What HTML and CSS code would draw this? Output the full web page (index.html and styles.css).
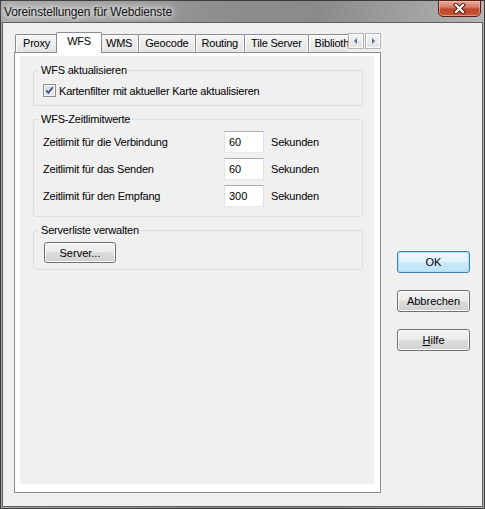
FILE: index.html
```html
<!DOCTYPE html>
<html>
<head>
  <title>Voreinstellungen für Webdienste</title>
  <meta charset="utf-8">
  <link rel="stylesheet" href="styles.css">
</head>
<body>
  <div class="window">
    <!-- Title bar -->
    <div class="titlebar">
      <span class="title">Voreinstellungen für Webdienste</span>
      <button class="close" aria-label="Schließen">
        <svg width="13" height="11" viewBox="0 0 13 11">
          <path d="M3 2 L10 9 M10 2 L3 9" stroke="#4a1d14" stroke-width="4.2" stroke-linecap="square"/>
          <path d="M3 2 L10 9 M10 2 L3 9" stroke="#fff" stroke-width="2.2" stroke-linecap="square"/>
        </svg>
      </button>
    </div>

    <div class="client">
      <!-- Tab control -->
      <div class="tabctl">
        <div class="tabstrip">
          <div class="tabs">
            <div class="tab">Proxy</div>
            <div class="tab active">WFS</div>
            <div class="tab">WMS</div>
            <div class="tab">Geocode</div>
            <div class="tab">Routing</div>
            <div class="tab">Tile Server</div>
            <div class="tab">Bibliotheken</div>
          </div>
          <div class="scroller">
            <span class="arrow">
              <svg width="14" height="14" viewBox="0 0 14 14"><path d="M8 4 L5 7 L8 10 Z" fill="#4f6ea3"/></svg>
            </span>
            <span class="arrow">
              <svg width="14" height="14" viewBox="0 0 14 14"><path d="M6 4 L9 7 L6 10 Z" fill="#4f6ea3"/></svg>
            </span>
          </div>
        </div>

        <div class="panel">
          <div class="page">
            <fieldset class="group group-update">
              <legend>WFS aktualisieren</legend>
              <label class="check">
                <span class="box">
                  <svg width="13" height="13" viewBox="0 0 13 13">
                    <defs>
                      <linearGradient id="boxfill" x1="0" y1="0" x2="1" y2="1">
                        <stop offset="0" stop-color="#cdd1d8"/>
                        <stop offset="1" stop-color="#f7f7f7"/>
                      </linearGradient>
                    </defs>
                    <rect x="0.5" y="0.5" width="12" height="12" fill="#f4f4f4" stroke="#8e8f8f"/>
                    <rect x="2.5" y="2.5" width="8" height="8" fill="url(#boxfill)" stroke="#e1e3e6"/>
                    <path d="M3.2 6.4 L5.4 8.9 L9.8 3.3" fill="none" stroke="#3b5288" stroke-width="1.8"/>
                  </svg>
                </span>
                Kartenfilter mit aktueller Karte aktualisieren
              </label>
            </fieldset>

            <fieldset class="group group-timeouts">
              <legend>WFS-Zeitlimitwerte</legend>
              <div class="row">
                <span class="row-label">Zeitlimit für die Verbindung</span>
                <input class="num" type="text" value="60">
                <span class="unit">Sekunden</span>
              </div>
              <div class="row">
                <span class="row-label">Zeitlimit für das Senden</span>
                <input class="num" type="text" value="60">
                <span class="unit">Sekunden</span>
              </div>
              <div class="row">
                <span class="row-label">Zeitlimit für den Empfang</span>
                <input class="num" type="text" value="300">
                <span class="unit">Sekunden</span>
              </div>
            </fieldset>

            <fieldset class="group group-servers">
              <legend>Serverliste verwalten</legend>
              <button class="btn btn-server">Server...</button>
            </fieldset>
          </div>
        </div>
      </div>

      <!-- Dialog buttons -->
      <div class="actions">
        <button class="btn default">OK</button>
        <button class="btn">Abbrechen</button>
        <button class="btn"><u>H</u>ilfe</button>
      </div>
    </div>
  </div>
</body>
</html>
```

FILE: styles.css
```css
/* Base */
* {
  box-sizing: border-box;
}
html, body {
  margin: 0;
  padding: 0;
}
body {
  font-family: "Liberation Sans", Arial, sans-serif;
  font-size: 11px;
  letter-spacing: -0.2px;
  color: #000;
  background: #f0f0f0;
}

/* Window frame */
.window {
  width: 485px;
  height: 509px;
  display: flex;
  flex-direction: column;
  border: 1px solid #3b3b3b;
  padding: 0 1px 1px 1px;
  background: linear-gradient(to right, #a9a9a9, #8e8e8e 45%, #8a8a8a 65%, #a4a4a4 88%, #b6b6b6);
}
.titlebar {
  height: 21px;
  display: flex;
  justify-content: space-between;
  align-items: flex-start;
  flex-shrink: 0;
}
.title {
  font-size: 12px;
  letter-spacing: -0.15px;
  padding: 4px 0 0 2px;
  color: #141414;
  text-shadow: 0 0 5px #fff, 0 0 9px #f4f4f4, 0 0 14px #e8e8e8;
}
.close {
  width: 43px;
  height: 17px;
  margin: -1px 2px 0 0;
  padding: 0;
  border: 1px solid #5a2016;
  border-radius: 0 0 5px 5px;
  background: linear-gradient(#e6a899, #d77d69 40%, #c2452c 55%, #c9583a);
  box-shadow: inset 0 0 0 1px rgba(255,210,200,0.45);
  display: flex;
  align-items: center;
  justify-content: center;
}
.client {
  flex: 1;
  display: flex;
  align-items: flex-start;
  border: 1px solid #5f5f5f;
  background: #f0f0f0;
  padding: 9px 0 0 11px;
}

/* Tab control */
.tabctl {
  width: 367px;
  display: flex;
  flex-direction: column;
}
.tabstrip {
  height: 20px;
  display: flex;
}
.tabs {
  width: 334px;
  height: 21px;
  display: flex;
  align-items: flex-end;
  overflow: hidden;
  position: relative;
  z-index: 1;
}
.tab {
  height: 18px;
  margin: 0 0 1px -1px;
  padding: 0 6px;
  border: 1px solid #898c95;
  border-bottom: none;
  border-radius: 2px 2px 0 0;
  background: linear-gradient(#f6f6f6, #e4e4e4);
  box-shadow: inset 1px 1px 0 #fff, inset -1px 0 0 #fbfbfb;
  line-height: 17px;
  white-space: nowrap;
  flex-shrink: 0;
}
.tab:first-child {
  margin-left: 1px;
  padding: 0 8px 0 7px;
}
.tab.active {
  height: 21px;
  margin: 0 -2px 0 -3px;
  padding: 0 10px;
  background: #fff;
  box-shadow: none;
  line-height: 16px;
  position: relative;
  z-index: 1;
}
.scroller {
  display: flex;
  gap: 1px;
  margin-top: 1px;
}
.arrow {
  width: 16px;
  height: 16px;
  border: 1px solid #b4b4b4;
  background: linear-gradient(#f4f4f4, #e2e2e2);
  box-shadow: inset 0 0 0 1px #fcfcfc;
  display: flex;
  align-items: center;
  justify-content: center;
}
.panel {
  height: 441px;
  border: 1px solid #898c95;
  background: #fff;
  padding: 3px 6px 8px 5px;
}
.page {
  height: 100%;
  background: #f0f0f0;
  padding: 8px 11px 0 13px;
}

/* Group boxes */
.group {
  margin: 0 0 7px 0;
  padding: 7px 9px 8px 9px;
  border: 1px solid #d5dfe5;
  border-radius: 3px;
  min-width: 0;
}
.group legend {
  padding: 0 2px;
  margin-left: -4px;
  line-height: 13px;
}
.group-timeouts {
  padding: 5px 9px 9px 9px;
}
.group-servers {
  padding: 5px 9px 6px 9px;
}
.check {
  display: flex;
  align-items: center;
  gap: 3px;
  height: 13px;
}
.box {
  width: 13px;
  height: 13px;
  display: flex;
}
.row {
  display: flex;
  align-items: center;
  height: 22px;
}
.row + .row {
  margin-top: 5px;
}
.row-label {
  width: 181px;
}
.num {
  width: 40px;
  height: 22px;
  padding: 0 4px;
  margin: 0;
  border: 1px solid;
  border-color: #abadb3 #dbdfe6 #e3e9ef #e2e3ea;
  background: #fff;
  font: inherit;
  color: #000;
  outline: none;
}
.unit {
  margin-left: 7px;
}

/* Buttons */
.btn {
  width: 73px;
  height: 22px;
  padding: 0;
  border: 1px solid #707070;
  border-radius: 3px;
  background: linear-gradient(#f2f2f2, #ebebeb 50%, #dddddd 50%, #cfcfcf);
  box-shadow: inset 0 0 0 1px #fcfcfc;
  font: inherit;
  color: #000;
}
.btn.default {
  border-color: #3c7fb1;
  background: linear-gradient(#eef7fd, #e1f2fc 50%, #cde9f9 50%, #bfe1f5);
  box-shadow: inset 0 0 0 1px #a6e4fb;
}
.btn-server {
  width: 72px;
  height: 21px;
  margin-left: 1px;
}
.actions {
  display: flex;
  flex-direction: column;
  gap: 17px;
  margin: 219px 0 0 16px;
}
```
